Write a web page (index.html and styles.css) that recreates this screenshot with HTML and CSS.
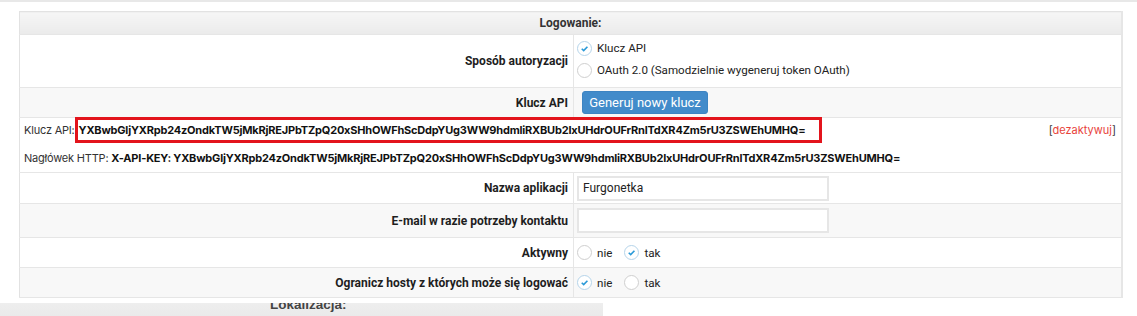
FILE: index.html
```html
<!doctype html>
<html>
<head>
    <title>Logowanie</title>
    <meta charset="utf-8">
    <link rel="stylesheet" href="styles.css">
</head>
<body>
    <div class="topline"></div>
    <div class="wrap">
        <table class="form">
            <tr>
                <th colspan="2" class="head">Logowanie:</th>
            </tr>
            <tr class="row-auth">
                <td class="label">Sposób autoryzacji</td>
                <td class="field">
                    <div class="opt-line">
                        <span class="radio on"><svg viewBox="0 0 16 16"><path d="M4.6 8.3 L7 10.6 L11.6 5.8"/></svg></span>
                        <span>Klucz API</span>
                    </div>
                    <div class="opt-line">
                        <span class="radio"></span>
                        <span>OAuth 2.0 (Samodzielnie wygeneruj token OAuth)</span>
                    </div>
                </td>
            </tr>
            <tr class="alt row-btn">
                <td class="label">Klucz API</td>
                <td class="field"><button class="btn">Generuj nowy klucz</button></td>
            </tr>
            <tr class="row-key">
                <td colspan="2" class="keycell">
                    <div class="keyline">
                        <span>Klucz API:<span class="keybox">YXBwbGljYXRpb24zOndkTW5jMkRjREJPbTZpQ20xSHhOWFhScDdpYUg3WW9hdmliRXBUb2IxUHdrOUFrRnlTdXR4Zm5rU3ZSWEhUMHQ=</span></span>
                        <span class="deact">[<a href="#">dezaktywuj</a>]</span>
                    </div>
                    <div class="keyline second">
                        <span>Nagłówek HTTP: <b>X-API-KEY: YXBwbGljYXRpb24zOndkTW5jMkRjREJPbTZpQ20xSHhOWFhScDdpYUg3WW9hdmliRXBUb2IxUHdrOUFrRnlTdXR4Zm5rU3ZSWEhUMHQ=</b></span>
                    </div>
                </td>
            </tr>
            <tr class="row-input">
                <td class="label">Nazwa aplikacji</td>
                <td class="field"><input type="text" value="Furgonetka"></td>
            </tr>
            <tr class="alt row-input row-mail">
                <td class="label">E-mail w razie potrzeby kontaktu</td>
                <td class="field"><input type="text" value=""></td>
            </tr>
            <tr class="row-radio">
                <td class="label">Aktywny</td>
                <td class="field">
                    <div class="opt-inline">
                        <span class="radio"></span><span class="opt-text">nie</span>
                        <span class="radio on"><svg viewBox="0 0 16 16"><path d="M4.6 8.3 L7 10.6 L11.6 5.8"/></svg></span><span class="opt-text">tak</span>
                    </div>
                </td>
            </tr>
            <tr class="alt row-radio">
                <td class="label">Ogranicz hosty z których może się logować</td>
                <td class="field">
                    <div class="opt-inline">
                        <span class="radio on"><svg viewBox="0 0 16 16"><path d="M4.6 8.3 L7 10.6 L11.6 5.8"/></svg></span><span class="opt-text">nie</span>
                        <span class="radio"></span><span class="opt-text">tak</span>
                    </div>
                </td>
            </tr>
        </table>
    </div>
    <div class="bottom">
        <div class="section">Lokalizacja:</div>
    </div>
</body>
</html>
```

FILE: styles.css
```css
body {
    margin: 0;
    background: #fff;
    font-family: Roboto, "Liberation Sans", sans-serif;
    font-size: 12px;
    color: #222;
    height: 316px;
    overflow: hidden;
}
.topline {
    height: 2px;
    background: #e8e8e8;
}
.wrap {
    padding: 9px 0 0 19px;
    height: 289px;
}
.form {
    width: 1104px;
    border-collapse: collapse;
    border: 1px solid #e2e2e2;
    border-right: 2px solid #e6e6e6;
}
.form td, .form th {
    padding: 0;
    border-bottom: 1px solid #e6e6e6;
}
.head {
    height: 22px;
    background: linear-gradient(#f6f6f6, #ebebeb);
    font-weight: bold;
    color: #333;
    text-align: center;
    border-bottom: 2px solid #e4e4e4;
}
.alt td {
    background: #f8f8f8;
}
.label {
    width: 548px;
    text-align: right;
    font-weight: bold;
    padding-right: 5px !important;
    border-right: 1px solid #e6e6e6;
    color: #1e1e1e;
}
.field {
    padding-left: 3px !important;
    font-size: 11.6px;
    color: #222;
}
.row-auth td {
    height: 50px;
}
.row-auth .field {
    vertical-align: top;
    padding-top: 2px !important;
}
.opt-line {
    display: flex;
    align-items: center;
    gap: 5px;
    height: 22px;
}
.radio {
    width: 13px;
    height: 13px;
    border: 1px solid #cfcfcf;
    border-radius: 50%;
    background: #fff;
    display: inline-flex;
    flex: none;
}
.radio.on {
    border-color: #b5d4ea;
}
.radio svg {
    width: 13px;
    height: 13px;
    fill: none;
    stroke: #2b9ad8;
    stroke-width: 2;
}
.row-btn td {
    height: 29px;
}
.btn {
    font-family: Roboto, "Liberation Sans", sans-serif;
    font-size: 13px;
    color: #fff;
    background: #428bca;
    border: 1px solid #3d84c2;
    border-radius: 3px;
    height: 23px;
    width: 126px;
    padding: 0;
    margin-left: 5px;
}
.keycell {
    height: 54px;
    vertical-align: top;
    padding-left: 4px !important;
    font-family: Inter, "Liberation Sans", sans-serif;
    font-size: 11px;
    letter-spacing: -0.2px;
    color: #333;
}
.keyline {
    display: flex;
    justify-content: space-between;
    align-items: center;
    height: 23px;
    padding-right: 5px;
}
.keyline.second {
    height: 31px;
    align-items: flex-start;
    padding-top: 10px;
    box-sizing: border-box;
}
.keyline b {
    color: #111;
}
.keybox {
    font-weight: bold;
    color: #111;
    border: 3px solid #e3141c;
    padding: 3px 14px 3px 1px;
}
.deact {
    color: #333;
    letter-spacing: 0;
}
.deact a {
    color: #e8433b;
    text-decoration: none;
}
.row-input td {
    height: 30px;
}
.row-mail td {
    height: 33px;
}
.field input {
    width: 240px;
    height: 21px;
    border: 2px solid #e6e6e6;
    padding: 0 4px;
    font-family: Roboto, "Liberation Sans", sans-serif;
    font-size: 12px;
    color: #222;
    margin-left: 0;
}
.row-radio td {
    height: 29px;
}
.opt-inline {
    display: flex;
    align-items: center;
}
.opt-text {
    margin: 0 12px 0 5px;
}
.bottom {
    width: 603px;
    height: 16px;
    background: linear-gradient(#eeeeee, #e9e9e9);
    overflow: hidden;
    margin-top: 3px;
}
.section {
    padding-left: 270px;
    margin-top: -6px;
    font-family: "Liberation Sans", sans-serif;
    font-size: 13.5px;
    font-weight: bold;
    color: #444;
}
```
